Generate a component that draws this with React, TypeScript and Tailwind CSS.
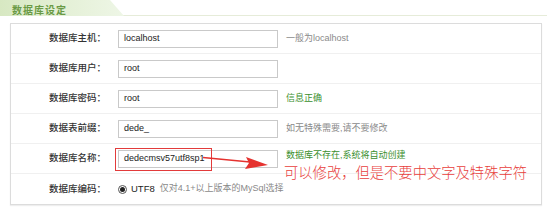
import { ReactNode } from "react"

const font = { fontFamily: '"Liberation Sans", Arial, "Noto Sans CJK SC", sans-serif' }

function Row({ label, children, last }: { label: string; children: ReactNode; last?: boolean }) {
  return (
    <div className={`flex items-center h-[30px] ${last ? "" : "border-b border-[#f0f0f0]"}`}>
      <div className="w-[96px] pr-[1px] text-right text-[9.5px] font-medium text-[#333]">{label}</div>
      <div className="flex items-center pl-[11px]">{children}</div>
    </div>
  )
}

function Field({ value }: { value: string }) {
  return (
    <div className="w-[160px] h-[18px] border border-[#c9c9c9] bg-white flex items-center pl-[5px] text-[9px] text-[#222]">
      {value}
    </div>
  )
}

export default function App() {
  return (
    <div className="relative w-[554px] h-[210px] bg-white overflow-hidden" style={font}>
      {/* 标题 */}
      <div className="h-[16px] w-[547px] border-b border-[#e6ecd9] relative">
        <div className="absolute left-0 top-0 h-[16px] w-[124px] bg-gradient-to-r from-[#d7e8c2] via-[#e4f0d6] to-[#eef6e6] [clip-path:polygon(0_0,110px_0,124px_16px,0_16px)]" />
        <span className="absolute left-[12px] top-[3px] text-[10px] font-bold tracking-[1px] text-[#6a9a45]">数据库设定</span>
      </div>

      {/* 表单 */}
      <div className="ml-[10px] mt-[7px] w-[532px] border border-[#dcdcdc] shadow-[0_1px_1px_#eee]">
        <Row label="数据库主机：">
          <Field value="localhost" />
          <span className="ml-[8px] text-[9px] text-[#8a8a8a]">一般为localhost</span>
        </Row>
        <Row label="数据库用户：">
          <Field value="root" />
        </Row>
        <Row label="数据库密码：">
          <Field value="root" />
          <span className="ml-[8px] text-[9px] text-[#3a8f2e]">信息正确</span>
        </Row>
        <Row label="数据表前缀：">
          <Field value="dede_" />
          <span className="ml-[8px] text-[9px] text-[#8a8a8a]">如无特殊需要,请不要修改</span>
        </Row>
        <Row label="数据库名称：">
          <Field value="dedecmsv57utf8sp1" />
          <span className="ml-[8px] -mt-[6px] text-[9px] text-[#3a8f2e]">数据库不存在,系统将自动创建</span>
        </Row>
        <Row label="数据库编码：" last>
          <span className="w-[9px] h-[9px] rounded-full border border-[#555] flex items-center justify-center">
            <span className="w-[5px] h-[5px] rounded-full bg-[#222]" />
          </span>
          <span className="ml-[4px] text-[9.5px] text-[#222]">UTF8</span>
          <span className="ml-[5px] text-[9px] text-[#8a8a8a]">仅对4.1+以上版本的MySql选择</span>
        </Row>
      </div>

      {/* 标注 */}
      <div className="absolute left-[115px] top-[148px] w-[97px] h-[23px] border border-[#e23b3b]" />
      <svg className="absolute left-0 top-0" width="554" height="210" viewBox="0 0 554 210">
        <line x1="203" y1="157.5" x2="250" y2="162" stroke="#e5322f" strokeWidth="1.3" />
        <polygon points="268,165 246,157 249,163 245,169" fill="#e5322f" />
      </svg>
      <span className="absolute left-[284px] top-[163px] text-[14.3px] leading-[18px] font-light text-[#e8403c] whitespace-nowrap" style={{ fontFamily: '"Noto Sans CJK SC", sans-serif' }}>
        可以修改，但是不要中文字及特殊字符
      </span>
    </div>
  )
}
